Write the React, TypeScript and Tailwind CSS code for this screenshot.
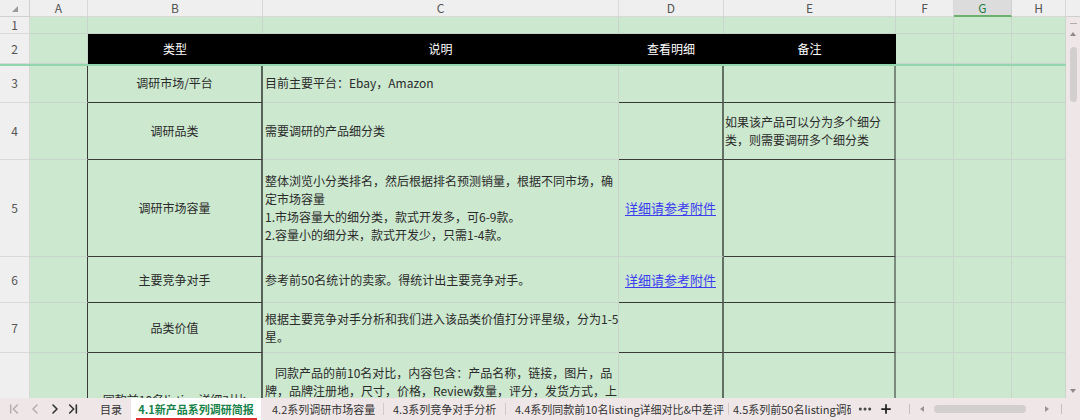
import type { ReactNode } from "react";
import { ChevronFirst, ChevronLast, ChevronLeft, ChevronRight, Ellipsis, Plus } from "lucide-react";

// column widths: row-header, A..H
const W = [
  "w-[30px]",
  "w-[58px]",
  "w-[175px]",
  "w-[356px]",
  "w-[105px]",
  "w-[172px]",
  "w-[58px]",
  "w-[58px]",
  "w-[54px]",
];
const LETTERS = ["A", "B", "C", "D", "E", "F", "G", "H"];

function Cell({ w, className = "", children }: { w: string; className?: string; children?: ReactNode }) {
  return (
    <div className={`flex h-full shrink-0 items-center border-b border-r border-[#c9d4ca] ${w} ${className}`}>
      {children}
    </div>
  );
}

function RowHead({ n }: { n: number }) {
  return (
    <Cell w={W[0]} className="justify-center border-[#d9d9d9] bg-[#efefef] text-[12px] text-[#555]">
      {n}
    </Cell>
  );
}

function Tail() {
  return (
    <>
      <Cell w={W[6]} />
      <Cell w={W[7]} />
      <Cell w={W[8]} />
    </>
  );
}

function Lines({ lines, indent }: { lines: string[]; indent?: boolean }) {
  return (
    <div className="leading-[18px]">
      {lines.map((l, i) => (
        <div key={i} className={`whitespace-nowrap ${indent && i === 0 ? "pl-[10px]" : ""}`}>
          {l}
        </div>
      ))}
    </div>
  );
}

function DocLink() {
  return <span className="text-[13px] text-[#3c3cf0] underline underline-offset-2">详细请参考附件</span>;
}

type Row = {
  n: number;
  h: string;
  type: string[];
  desc: string[];
  indent?: boolean;
  link?: boolean;
  softBottom?: boolean;
  note?: string[];
};

const rows: Row[] = [
  { n: 3, h: "h-[39px]", type: ["调研市场/平台"], desc: ["目前主要平台：Ebay，Amazon"] },
  {
    n: 4,
    h: "h-[57px]",
    type: ["调研品类"],
    desc: ["需要调研的产品细分类"],
    note: ["如果该产品可以分为多个细分", "类，则需要调研多个细分类"],
  },
  {
    n: 5,
    h: "h-[97px]",
    type: ["调研市场容量"],
    desc: [
      "整体浏览小分类排名，然后根据排名预测销量，根据不同市场，确",
      "定市场容量",
      "1.市场容量大的细分类，款式开发多，可6-9款。",
      "2.容量小的细分来，款式开发少，只需1-4款。",
    ],
    link: true,
    softBottom: true,
  },
  { n: 6, h: "h-[46px]", type: ["主要竞争对手"], desc: ["参考前50名统计的卖家。得统计出主要竞争对手。"], link: true },
  {
    n: 7,
    h: "h-[50px]",
    type: ["品类价值"],
    desc: ["根据主要竞争对手分析和我们进入该品类价值打分评星级，分为1-5", "星。"],
  },
  {
    n: 8,
    h: "h-[112px]",
    type: ["同款前10名listing详细对比", "&中差评"],
    indent: true,
    desc: [
      "同款产品的前10名对比，内容包含：产品名称，链接，图片，品",
      "牌，品牌注册地，尺寸，价格，Review数量，评分，发货方式，上",
      "架时间，排名，变体数量，卖点描述等，并整理出中差评内容，",
      "分析出各产品的优劣势，",
      "为新品开发提供参考。",
    ],
  },
];

function Sheet() {
  return (
    <div className="relative h-[398px] w-[1066px] overflow-hidden">
      {/* column letters */}
      <div className="flex h-[17px]">
        <Cell w={W[0]} className="justify-center border-[#d0d0d0] bg-[#efefef]">
          <svg width="6" height="6" viewBox="0 0 6 6" className="ml-[1px] mt-[1px]">
            <polygon points="6,0 6,6 0,6" fill="#9a9a9a" />
          </svg>
        </Cell>
        {LETTERS.map((l, i) => (
          <Cell
            key={l}
            w={W[i + 1]}
            className={
              l === "G"
                ? "justify-center border-[#d0d0d0] border-b-2 border-b-[#6cb26f] bg-[#dcdcdc] text-[12px] text-[#1e7d45]"
                : "justify-center border-[#d8d8d8] bg-[#efefef] text-[12px] text-[#555]"
            }
          >
            {l}
          </Cell>
        ))}
      </div>

      {/* row 1 */}
      <div className="flex h-[17px] bg-[#cce8cf]">
        <RowHead n={1} />
        {W.slice(1).map((w, i) => (
          <Cell key={i} w={w} />
        ))}
      </div>

      {/* row 2: table header */}
      <div className="flex h-[30px] bg-[#cce8cf] text-[12px] text-white">
        <RowHead n={2} />
        <Cell w={W[1]} />
        <Cell w={W[2]} className="justify-center border-black bg-black">类型</Cell>
        <Cell w={W[3]} className="justify-center border-black bg-black">说明</Cell>
        <Cell w={W[4]} className="justify-center border-black bg-black">查看明细</Cell>
        <Cell w={W[5]} className="justify-center border-black bg-black">备注</Cell>
        <Tail />
      </div>

      {rows.map((r) => (
        <div key={r.n} className={`flex bg-[#cce8cf] text-[12px] text-[#2b2b2b] ${r.h}`}>
          <RowHead n={r.n} />
          <Cell w={W[1]} className="border-r-[#3a3a3a]" />
          <Cell w={W[2]} className="justify-center border-r-2 border-b-[#3a3a3a] border-r-[#56625a] text-center">
            <Lines lines={r.type} />
          </Cell>
          <Cell w={W[3]} className="border-[#3a3a3a] pl-[2px]">
            <Lines lines={r.desc} indent={r.indent} />
          </Cell>
          <Cell
            w={W[4]}
            className={`justify-center border-r-2 border-r-[#617063] ${r.softBottom ? "" : "border-b-[#3a3a3a]"}`}
          >
            {r.link && <DocLink />}
          </Cell>
          <Cell w={W[5]} className="border-r-2 border-b-[#3a3a3a] border-r-[#7a8b7d] pl-[1px]">
            {r.note && <Lines lines={r.note} />}
          </Cell>
          <Tail />
        </div>
      ))}

      {/* frozen pane divider */}
      <div className="absolute left-0 top-[64px] h-[2px] w-[1066px] bg-[#93d6ae]" />
    </div>
  );
}

function VScroll() {
  return (
    <div className="flex h-[398px] w-[14px] flex-col">
      <div className="h-[17px] border-b border-[#d0d0d0] bg-[#efefef]" />
      <div className="flex flex-1 flex-col items-center bg-[#efe7e7]">
        <div className="mt-[6px] h-px w-[7px] bg-[#b4abab]" />
        <svg width="6" height="4" viewBox="0 0 6 4" className="mt-[8px]">
          <polygon points="3,0 6,4 0,4" fill="#8f8a8a" />
        </svg>
        <div className="mt-[11px] h-[55px] w-[7px] rounded-full bg-[#d3cfcf]" />
        <svg width="6" height="4" viewBox="0 0 6 4" className="mb-[5px] mt-auto">
          <polygon points="0,0 6,0 3,4" fill="#8f8a8a" />
        </svg>
      </div>
    </div>
  );
}

function TabBar() {
  return (
    <div className="flex h-[22px] items-center overflow-hidden bg-[#efe7e7] text-[11px] text-[#333]">
      <ChevronFirst size={16} strokeWidth={2.2} className="ml-[6px] shrink-0 text-[#b3adad]" />
      <ChevronLeft size={16} strokeWidth={2.2} className="ml-[5px] shrink-0 text-[#b3adad]" />
      <ChevronRight size={16} strokeWidth={2.4} className="ml-[4px] shrink-0 text-[#333]" />
      <ChevronLast size={16} strokeWidth={2.4} className="ml-[2px] shrink-0 text-[#333]" />
      <span className="ml-[19px] shrink-0">目录</span>
      <div className="relative ml-[9px] flex h-full w-[130px] shrink-0 items-center justify-center bg-white font-bold text-[#17834a]">
        4.1新产品系列调研简报
        <div className="absolute bottom-0 left-[5px] right-[4px] h-[2px] bg-[#e03030]" />
      </div>
      <div className="w-[122px] shrink-0 whitespace-nowrap pl-[11px]">4.2系列调研市场容量</div>
      <div className="h-[12px] w-px shrink-0 bg-[#d2caca]" />
      <div className="w-[121px] shrink-0 whitespace-nowrap pl-[9px]">4.3系列竞争对手分析</div>
      <div className="h-[12px] w-px shrink-0 bg-[#d2caca]" />
      <div className="w-[222px] shrink-0 whitespace-nowrap pl-[9px]">4.4系列同款前10名listing详细对比&中差评</div>
      <div className="h-[12px] w-px shrink-0 bg-[#d2caca]" />
      <div className="w-[122px] shrink-0 overflow-hidden whitespace-nowrap pl-[4px]">4.5系列前50名listing调研分析</div>
      <Ellipsis size={16} strokeWidth={2.5} className="ml-[6px] shrink-0 text-[#444]" />
      <Plus size={14} strokeWidth={3} className="ml-[6px] shrink-0 text-[#222]" />
      <div className="ml-[16px] h-[10px] w-px shrink-0 bg-[#c8c0c0]" />
      <svg width="4" height="6" viewBox="0 0 4 6" className="ml-[10px] shrink-0">
        <polygon points="4,0 4,6 0,3" fill="#9a9494" />
      </svg>
      <div className="ml-[10px] h-[8px] w-[92px] shrink-0 rounded-full bg-[#d3cfcf]" />
      <svg width="4" height="6" viewBox="0 0 4 6" className="ml-[19px] shrink-0">
        <polygon points="0,0 4,3 0,6" fill="#9a9494" />
      </svg>
      <div className="ml-[12px] h-[10px] w-px shrink-0 bg-[#c8c0c0]" />
    </div>
  );
}

export default function App() {
  return (
    <div className="flex h-[420px] w-[1080px] flex-col overflow-hidden bg-[#cce8cf] font-['Noto_Sans_CJK_SC','Noto_Sans',sans-serif]">
      <div className="flex">
        <Sheet />
        <VScroll />
      </div>
      <TabBar />
    </div>
  );
}
